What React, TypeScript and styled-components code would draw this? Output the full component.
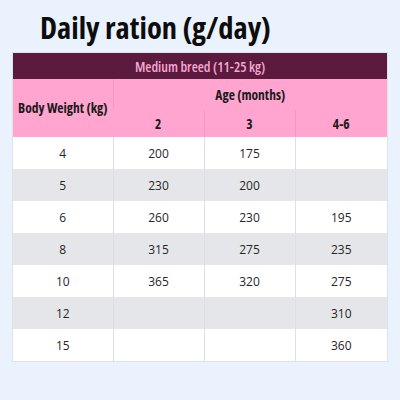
import React from "react"
import styled, { createGlobalStyle } from "styled-components"

const GlobalStyle = createGlobalStyle`
  html, body {
    margin: 0;
    padding: 0;
    background: #e9f2fd;
  }
  body {
    font-family: "Open Sans", "Noto Sans", sans-serif;
    color: #2b2b2b;
  }
`

const Page = styled.div`
  width: 400px;
  height: 400px;
  box-sizing: border-box;
  padding: 9px 13px 0 13px;
`

const Title = styled.h1`
  margin: 0 0 8px 27px;
  font-size: 30.5px;
  line-height: 36px;
  font-weight: 700;
  font-stretch: 75%;
  color: #0d0d0d;
`

const Table = styled.table`
  width: 374px;
  border-collapse: collapse;
  table-layout: fixed;
  background: #ffffff;
  box-shadow: 0 0 0 1px #dde3ea;
`

const BreedCell = styled.th`
  height: 26px;
  padding: 0;
  background: #5b1b3e;
  color: #f7a6d2;
  font-size: 14px;
  font-weight: 600;
  font-stretch: 75%;
`

const HeadCell = styled.th<{ $tall?: boolean }>`
  height: ${(p) => (p.$tall ? "31px" : "27px")};
  padding: 0;
  background: #ffa5d0;
  color: #1a1a1a;
  font-size: 13.5px;
  font-weight: 700;
  font-stretch: 75%;
  white-space: nowrap;
  border-left: 1px solid #f497c4;
  &:first-child {
    border-left: none;
  }
`

const Row = styled.tr<{ $shade?: boolean }>`
  background: ${(p) => (p.$shade ? "#e4e6ea" : "#ffffff")};
`

const Cell = styled.td`
  height: 32px;
  padding: 0;
  text-align: center;
  font-size: 12px;
  color: #262626;
  border-left: 1px solid #dcdfe3;
  &:first-child {
    border-left: none;
  }
`

const rows: [string, string, string, string][] = [
  ["4", "200", "175", ""],
  ["5", "230", "200", ""],
  ["6", "260", "230", "195"],
  ["8", "315", "275", "235"],
  ["10", "365", "320", "275"],
  ["12", "", "", "310"],
  ["15", "", "", "360"],
]

export default function App() {
  return (
    <Page>
      <GlobalStyle />
      <Title>Daily ration (g/day)</Title>
      <Table>
        <colgroup>
          <col style={{ width: 100 }} />
          <col style={{ width: 91 }} />
          <col style={{ width: 91 }} />
          <col style={{ width: 92 }} />
        </colgroup>
        <thead>
          <tr>
            <BreedCell colSpan={4}>Medium breed (11-25 kg)</BreedCell>
          </tr>
          <tr>
            <HeadCell rowSpan={2}>Body Weight (kg)</HeadCell>
            <HeadCell colSpan={3} $tall>
              Age (months)
            </HeadCell>
          </tr>
          <tr>
            <HeadCell>2</HeadCell>
            <HeadCell>3</HeadCell>
            <HeadCell>4-6</HeadCell>
          </tr>
        </thead>
        <tbody>
          {rows.map((r, i) => (
            <Row key={r[0]} $shade={i % 2 === 1}>
              {r.map((v, j) => (
                <Cell key={j}>{v}</Cell>
              ))}
            </Row>
          ))}
        </tbody>
      </Table>
    </Page>
  )
}
